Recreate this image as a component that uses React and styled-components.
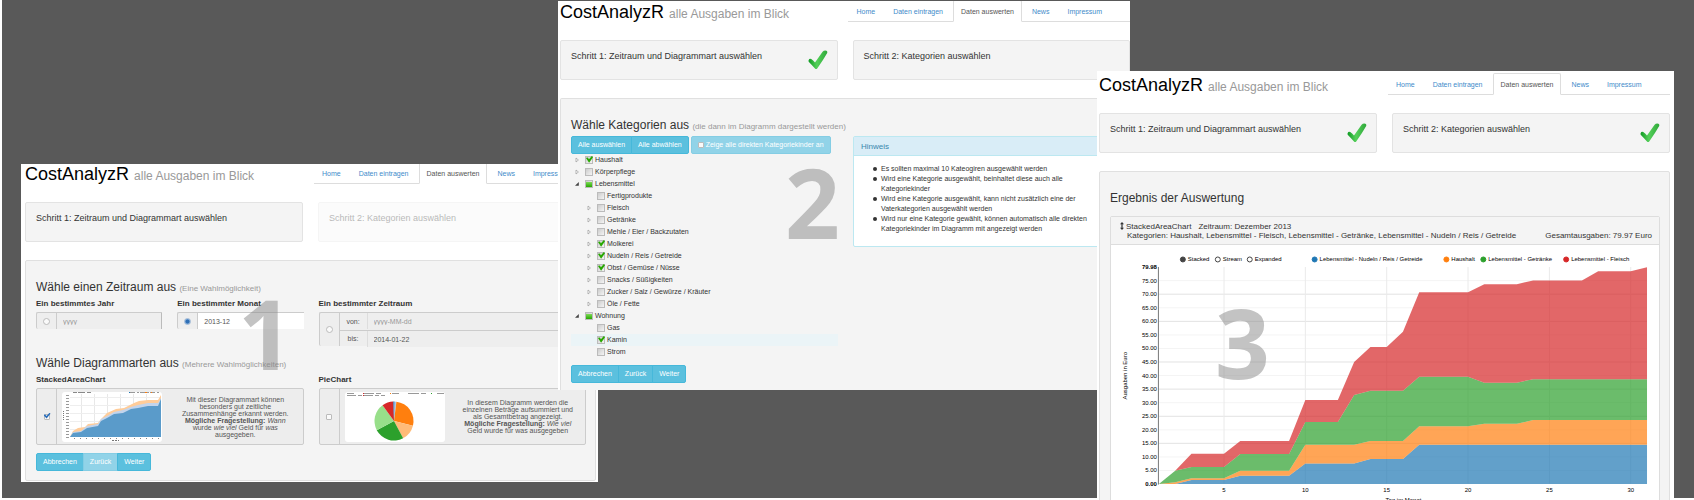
import React from "react";
import styled, { createGlobalStyle, css } from "styled-components";

const GlobalStyle = createGlobalStyle`
  *, *::before, *::after { box-sizing: border-box; }
  body {
    margin: 0;
    background: #fff;
    color: #333;
    font: 7px/10px "Liberation Sans", Arial, sans-serif;
  }
  button, input { font: inherit; margin: 0; }
  h1, h2, h3, p, ul { margin: 0; padding: 0; font-weight: 400; }
`;

/* ---------- desktop and windows ---------- */

const Page = styled.main`
  height: 100vh;
  overflow: hidden;
  padding: 0 0 2px 2px;
`;

const Desktop = styled.div`
  height: 100%;
  background: #595959;
  display: grid;
  grid-template-columns:
    minmax(0, 19fr) minmax(0, 537fr) minmax(0, 40fr) minmax(0, 499fr)
    minmax(0, 33fr) minmax(0, 544fr) minmax(0, 20fr);
  align-items: start;
`;

const Window = styled.section`
  position: relative;
  grid-row: 1;
  grid-column: ${(p) => p.$columns};
  margin-top: ${(p) => p.$top}px;
  padding: ${(p) => p.$padding};
  background: #fff;
  overflow: hidden;
`;

const BigNumber = styled.div`
  position: absolute;
  left: ${(p) => p.$left}px;
  top: ${(p) => p.$top}px;
  font: 700 96px/100px "Open Sans", "Noto Sans", sans-serif;
  color: rgba(136, 136, 136, 0.5);
  pointer-events: none;
`;

/* ---------- header ---------- */

const Header = styled.header`
  display: grid;
  grid-template-columns: minmax(0, 289fr) minmax(0, 282fr);
  height: 20px;
  margin-bottom: 18px;
`;

const Brand = styled.h1`
  font-size: 18px;
  line-height: 20px;
  color: #000;
  white-space: nowrap;
`;

const Tagline = styled.small`
  font-size: 12px;
  line-height: 1;
  color: #999;
`;

const Tabs = styled.nav`
  display: flex;
  gap: 2px;
  height: 22px;
  margin-top: -2px;
  border-bottom: 1px solid #ddd;
`;

const Tab = styled.a`
  height: 22px;
  padding: 0 7px;
  border: 1px solid transparent;
  border-radius: 2px 2px 0 0;
  line-height: 21px;
  color: #428bca;
  text-decoration: none;
  white-space: nowrap;
  ${(p) =>
    p.$active &&
    css`
      color: #555;
      background: #fff;
      border-color: #ddd #ddd #fff;
    `}
`;

/* ---------- steps ---------- */

const Columns = styled.div`
  display: grid;
  grid-template-columns: minmax(0, 1fr) minmax(0, 1fr);
  gap: 15px;
`;

const Steps = styled(Columns)`
  margin-bottom: 18px;
`;

const StepCard = styled.div`
  display: flex;
  justify-content: space-between;
  height: 40px;
  padding: 9px 9px 9px 10px;
  border: 1px solid #e3e3e3;
  border-radius: 2px;
  background: #f4f4f4;
  opacity: ${(p) => (p.$disabled ? 0.35 : 1)};
`;

const StepTitle = styled.h2`
  font-size: 9px;
  line-height: 12px;
`;

const Panel = styled.div`
  padding: 19px 9px ${(p) => (p.$open ? 7 : 9)}px 10px;
  border: 1px solid #e0e0e0;
  border-bottom-width: ${(p) => (p.$open ? 0 : 1)}px;
  border-radius: ${(p) => (p.$open ? "2px 2px 0 0" : "2px")};
  background: #f4f4f4;
`;

const Heading = styled.h2`
  margin: ${(p) => (p.$spaced ? 10 : 0)}px 0 4px;
  font-size: 12px;
  line-height: 14px;
  white-space: nowrap;
`;

const Hint = styled.small`
  font-size: 8px;
  line-height: 1;
  color: #999;
`;

/* ---------- form controls ---------- */

const FieldLabel = styled.label`
  display: block;
  margin-bottom: 3px;
  font-size: 8px;
  line-height: 11px;
  font-weight: 700;
`;

const Periods = styled(Columns)`
  min-height: 48px;
`;

const InputGroup = styled.div`
  display: flex;
  border: 1px solid #ccc;
  border-width: 1px 0 0 1px;
  border-radius: 2px 0 0 2px;
  height: ${(p) => (p.$tall ? 34 : 17)}px;
  background: #eee;
`;

const Addon = styled.span`
  display: flex;
  flex: 0 0 ${(p) => (p.$wide ? 27 : 19)}px;
  align-items: center;
  justify-content: center;
  color: #555;
`;

const TextInput = styled.input`
  flex: 1;
  min-width: 0;
  width: 100%;
  height: 16px;
  padding: 0 6px;
  border: 0;
  border-left: 1px solid #ccc;
  border-right: ${(p) => (p.$cut ? "0" : "1px solid #bbb")};
  border-radius: 0;
  background: ${(p) => (p.disabled ? "#eee" : "#fff")};
  color: #555;
  &::placeholder { color: #999; opacity: 1; }
`;

const RangeRows = styled.div`
  flex: 1;
  border-left: 1px solid #ccc;
`;

const RangeRow = styled.div`
  display: flex;
  height: 17px;
  & + & { border-top: 1px solid #ccc; }
  input { border-left-color: #ddd; }
`;

const Radio = styled.input.attrs({ type: "radio" })`
  appearance: none;
  width: 7px;
  height: 7px;
  border: 1px solid #bbb;
  border-radius: 50%;
  background: #fafafa;
  &:checked {
    border-color: #9db7d5;
    background: radial-gradient(circle, #2f6fb5 40%, #8db8e4 80%);
  }
`;

const Check = styled.input.attrs({ type: "checkbox" })`
  appearance: none;
  flex: none;
  width: 6px;
  height: 6px;
  border: 1px solid #bbb;
  border-radius: 1px;
  background: #fafafa;
  &:checked::before {
    content: "";
    display: block;
    width: 7px;
    height: 6px;
    margin: -2px 0 0 -1px;
    background: #2a6ebb;
    clip-path: polygon(0 45%, 22% 30%, 42% 58%, 86% 4%, 100% 20%, 44% 100%);
  }
`;

const ChartOption = styled.div`
  display: flex;
  height: 57px;
  margin-bottom: 8px;
  border: 1px solid #ccc;
  border-radius: 2px;
  background: #ededed;
`;

const OptionBody = styled.div`
  flex: 1;
  display: flex;
  align-items: center;
  gap: 14px;
  padding: 0 8px 0 5px;
  border-left: 1px solid #ccc;
`;

const Thumb = styled.svg`
  flex: none;
  width: 100px;
  height: 50px;
  border-radius: 3px;
  background: #fff;
`;

const OptionText = styled.p`
  flex: 1;
  line-height: 7px;
  text-align: center;
  color: #555;
`;

const ButtonGroup = styled.div`
  display: flex;
`;

const Button = styled.button`
  height: 18px;
  padding: 0 6px;
  border: 1px solid #46b8da;
  background: #5bc0de;
  color: #fff;
  line-height: 16px;
  white-space: nowrap;
  & + & { margin-left: -1px; }
  &:first-child { border-radius: 2px 0 0 2px; }
  &:last-child { border-radius: 0 2px 2px 0; }
  &:disabled {
    background: #91d3e8;
    border-color: #84cde4;
  }
`;

const ToggleButton = styled.label`
  display: flex;
  align-items: center;
  gap: 2px;
  height: 18px;
  padding: 0 6px;
  border: 1px solid #84cde4;
  border-radius: 2px;
  background: #91d3e8;
  color: #fff;
  white-space: nowrap;
`;

/* ---------- category tree ---------- */

const Toolbar = styled.div`
  display: flex;
  gap: 2px;
`;

const Tree = styled.ul`
  margin-bottom: 7px;
  list-style: none;
`;

const TreeRow = styled.li`
  display: flex;
  align-items: center;
  height: 12px;
  padding-left: ${(p) => 4 + p.$level * 12}px;
  background: ${(p) => (p.$active ? "#ebf4f7" : "transparent")};
`;

const TreeCheck = styled.input.attrs({ type: "checkbox" })`
  appearance: none;
  flex: none;
  width: 8px;
  height: 8px;
  margin: 0 2px 0 6px;
  border: 1px solid #bbb;
  background: linear-gradient(135deg, #ccc, #f4f4f4);
  &:checked::before,
  &:indeterminate::before {
    content: "";
    display: block;
    width: 7px;
    height: 7px;
    margin: -1px 0 0 0;
    background: #27a800;
    clip-path: polygon(0 30%, 25% 22%, 42% 45%, 84% 0, 100% 18%, 44% 96%);
  }
  &:indeterminate::before {
    width: 6px;
    height: 5px;
    margin: 1px 0 0 0;
    clip-path: none;
    background: linear-gradient(#7ed957, #27a800);
  }
`;

const Arrow = styled.svg`
  width: 4px;
  height: 6px;
  flex: none;
`;

const NoteBox = styled.aside`
  align-self: start;
  margin-top: 18px;
  border: 1px solid #bce8f1;
  border-radius: 2px;
  background: #fff;
`;

const NoteTitle = styled.h3`
  height: 19px;
  padding: 0 7px;
  border-bottom: 1px solid #bce8f1;
  background: #d9edf7;
  font-size: 8px;
  line-height: 19px;
  color: #3a87ad;
`;

const NoteList = styled.ul`
  padding: 8px 7px 12px 27px;
  list-style: none;
`;

const NoteItem = styled.li`
  position: relative;
  &::before {
    content: "";
    position: absolute;
    left: -8px;
    top: 3px;
    width: 4px;
    height: 4px;
    border-radius: 50%;
    background: #333;
  }
`;

/* ---------- result ---------- */

const ResultCard = styled.article`
  margin-top: 11px;
  border: 1px solid #ddd;
  border-radius: 2px;
  background: #fff;
`;

const ResultHeader = styled.header`
  display: flex;
  align-items: flex-end;
  justify-content: space-between;
  padding: 5px 7px 4px 9px;
  border-bottom: 1px solid #ddd;
  background: #f4f4f4;
  font-size: 8px;
  line-height: 9px;
`;

const ResultLine = styled.div`
  display: flex;
  gap: 7px;
  padding-left: ${(p) => (p.$indent ? 7 : 0)}px;
  white-space: nowrap;
`;

const ChartName = styled.span`
  display: flex;
  gap: 2px;
`;

const Chart = styled.svg`
  display: block;
  width: 100%;
  font: 6px "Liberation Sans", Arial, sans-serif;
`;

/* ---------- data ---------- */

const TABS = ["Home", "Daten eintragen", "Daten auswerten", "News", "Impressum"];

const TREE = [
  ["Haushalt", 0, "closed", "on"],
  ["Körperpflege", 0, "closed", ""],
  ["Lebensmittel", 0, "open", "part"],
  ["Fertigprodukte", 1, "", ""],
  ["Fleisch", 1, "closed", ""],
  ["Getränke", 1, "closed", ""],
  ["Mehle / Eier / Backzutaten", 1, "closed", ""],
  ["Molkerei", 1, "closed", "on"],
  ["Nudeln / Reis / Getreide", 1, "closed", "on"],
  ["Obst / Gemüse / Nüsse", 1, "closed", "on"],
  ["Snacks / Süßigkeiten", 1, "closed", ""],
  ["Zucker / Salz / Gewürze / Kräuter", 1, "closed", ""],
  ["Öle / Fette", 1, "closed", ""],
  ["Wohnung", 0, "open", "part"],
  ["Gas", 1, "", ""],
  ["Kamin", 1, "", "on"],
  ["Strom", 1, "", ""],
];

const NOTES = [
  "Es sollten maximal 10 Kateogiren ausgewählt werden",
  "Wird eine Kategorie ausgewählt, beinhaltet diese auch alle Kategoriekinder",
  "Wird eine Kategorie ausgewählt, kann nicht zusätzlich eine der Vaterkategorien ausgewählt werden",
  "Wird nur eine Kategorie gewählt, können automatisch alle direkten Kategoriekinder im Diagramm mit angezeigt werden",
];

/* Upper edge of each stacked layer as [day, euro] pairs. */
const BASE = [[1, 0], [31, 0]];
const BLUE = [[1, 0], [2, 0], [3, 1.5], [5, 1.5], [6, 3], [9, 3], [10, 7.6], [13, 7.6], [14, 9.2], [16, 9.2], [17, 14.5], [31, 14.5]];
const ORANGE = [[1, 0], [2, 0.7], [3, 2.1], [5, 2.1], [6, 4.9], [9, 4.9], [10, 14.5], [13, 14.5], [14, 15.9], [16, 15.9], [17, 21.3], [20, 21.3], [21, 22.2], [23, 22.2], [24, 23.6], [31, 23.6]];
const GREEN = [[1, 0], [2, 4.9], [3, 6.3], [5, 6.3], [6, 11.1], [9, 11.1], [10, 22.9], [12, 22.9], [13, 32.8], [14, 34.4], [16, 34.4], [17, 39.6], [20, 39.6], [21, 37.4], [23, 37.4], [24, 38.7], [31, 38.7]];
const RED = [[1, 0], [2, 4.9], [3, 11.2], [5, 11.2], [6, 15.9], [9, 15.9], [10, 31], [12, 31], [13, 45], [14, 50.5], [15, 50.5], [16, 56.2], [17, 70.7], [20, 70.7], [21, 73.7], [23, 73.7], [24, 75.1], [27, 75.1], [28, 78.5], [30, 78.5], [31, 79.9]];

const LAYERS = [
  [BASE, BLUE, "#1f77b4"],
  [BLUE, ORANGE, "#ff7f0e"],
  [ORANGE, GREEN, "#2ca02c"],
  [GREEN, RED, "#d62728"],
];

const LEGEND = [
  [72, "Stacked", "#444", "#444"],
  [107, "Stream", "#fff", "#444"],
  [139, "Expanded", "#fff", "#444"],
  [204, "Lebensmittel - Nudeln / Reis / Getreide", "#1f77b4", "#1f77b4"],
  [336, "Haushalt", "#ff7f0e", "#ff7f0e"],
  [373, "Lebensmittel - Getränke", "#2ca02c", "#2ca02c"],
  [456, "Lebensmittel - Fleisch", "#d62728", "#d62728"],
];

const STRONG = [15, 25, 35, 45, 60, 70];

const sx = (day) => 48 + (day - 1) * 16.3;
const sy = (euro) => 239.5 - euro * 2.717;
const area = ([low, high]) =>
  [...high, ...[...low].reverse()].map(([d, v]) => `${sx(d).toFixed(1)},${sy(v).toFixed(1)}`).join(" ");

/* ---------- parts ---------- */

function AppHeader() {
  return (
    <Header>
      <Brand>
        CostAnalyzR <Tagline>alle Ausgaben im Blick</Tagline>
      </Brand>
      <Tabs>
        {TABS.map((t) => (
          <Tab key={t} href="#" $active={t === "Daten auswerten"}>{t}</Tab>
        ))}
      </Tabs>
    </Header>
  );
}

function DoneMark({ id }) {
  return (
    <svg width="20" height="20" viewBox="0 0 20 20" aria-hidden="true">
      <defs>
        <linearGradient id={id} x1="0" y1="0" x2="1" y2="0">
          <stop offset="0" stopColor="#0f9a22" />
          <stop offset="0.45" stopColor="#55d05a" />
          <stop offset="1" stopColor="#2fa83a" />
        </linearGradient>
      </defs>
      <path
        d="M0.6 10.2 Q1.4 8.2 3.2 9 Q5.2 10.4 7 12.6 Q10.6 7.4 14.6 1.8 Q15.6 0.6 17.4 0.6 Q19.8 0.8 19.2 3 Q15 10.4 9.4 18.2 Q8.2 19.8 7 18.4 Q3.6 14.8 0.9 12 Q0.3 11.2 0.6 10.2Z"
        fill={`url(#${id})`}
      />
    </svg>
  );
}

function StepBar({ done, id, disabledSecond }) {
  return (
    <Steps>
      <StepCard>
        <StepTitle>Schritt 1: Zeitraum und Diagrammart auswählen</StepTitle>
        {done > 0 && <DoneMark id={`${id}a`} />}
      </StepCard>
      <StepCard $disabled={disabledSecond}>
        <StepTitle>Schritt 2: Kategorien auswählen</StepTitle>
        {done > 1 && <DoneMark id={`${id}b`} />}
      </StepCard>
    </Steps>
  );
}

function WizardButtons({ backDisabled }) {
  return (
    <ButtonGroup>
      <Button type="button">Abbrechen</Button>
      <Button type="button" disabled={backDisabled}>Zurück</Button>
      <Button type="button">Weiter</Button>
    </ButtonGroup>
  );
}

function AreaThumb() {
  const blue = "8,45 11,41 19,40 25,36 36,34 39,29 45,26 52,22 61,21 69,17 76,16 86,14 96,14 99,7";
  const pale = "8,45 11,40 19,39 25,34 36,32 39,27 45,24 52,20 61,18 69,15 76,13 86,11 96,11 99,6";
  const peach = "8,45 11,39 16,36 23,35 26,32 36,31 39,27 45,21 54,17 62,16 72,11 77,9 86,8 96,8 99,3";
  return (
    <Thumb viewBox="0 0 100 50" aria-hidden="true">
      {[19, 32, 45, 58, 71, 84].map((x) => (
        <path key={x} d={`M${x}.5 2V45`} stroke="#e8e8e8" />
      ))}
      {[5, 13, 21, 29, 37].map((y) => (
        <path key={y} d={`M8 ${y}.5H99`} stroke="#eee" />
      ))}
      <path d="M11 .5H30" stroke="#888" strokeDasharray="4 1 7 2" />
      <path d="M68 .5H98" stroke="#999" strokeDasharray="5 2 2 1" />
      <path d="M67 .5h1" stroke="#1f77b4" />
      <path d="M83 .5h2M89 .5h1" stroke="#ff7f0e" />
      <polygon points={`${peach} 99,45`} fill="#ffcc99" />
      <polygon points={`${pale} 99,45`} fill="#c2d4ec" />
      <polygon points={`${blue} 99,45`} fill="#5a9bca" />
      <path d="M5.5 3V46" stroke="#999" strokeWidth="3" strokeDasharray="1 2" />
      <path d="M1.5 19V29" stroke="#777" strokeDasharray="1 1" />
      <path d="M12 46.5H98" stroke="#888" strokeDasharray="1 5" />
      <path d="M50 48.5H57" stroke="#777" strokeDasharray="2 1" />
    </Thumb>
  );
}

const SLICES = [
  [0, 7, "#aec7e8"],
  [7, 104, "#ff7f0e"],
  [104, 152, "#ffbb78"],
  [152, 242, "#2ca02c"],
  [242, 324, "#98df8a"],
  [324, 358, "#d62728"],
  [358, 361, "#1f77b4"],
];

function PieThumb() {
  const at = (deg) => {
    const a = (deg * Math.PI) / 180;
    return `${(49 + 19.5 * Math.sin(a)).toFixed(2)} ${(29 - 19.5 * Math.cos(a)).toFixed(2)}`;
  };
  return (
    <Thumb viewBox="0 0 100 50" aria-hidden="true">
      {SLICES.map(([from, to, fill]) => (
        <path key={from} d={`M49 29L${at(from)}A19.5 19.5 0 0 1 ${at(to)}Z`} fill={fill} />
      ))}
      <path d="M2 1.5H99" stroke="#999" strokeDasharray="7 9 11 2 5 11" />
      <path d="M2 3.5H40" stroke="#999" strokeDasharray="9 2 4 2" />
      <path d="M18 1.5h1M18 3.5h1" stroke="#d62728" />
      <path d="M45 1.5h1" stroke="#ff7f0e" />
      <path d="M86 1.5h1" stroke="#2ca02c" />
    </Thumb>
  );
}

function PeriodWindow() {
  return (
    <Window $columns="2 / 4" $top={164} $padding="0 2px 1px 4px">
      <AppHeader />
      <StepBar done={0} id="w1" disabledSecond />
      <Panel>
        <Heading>Wähle einen Zeitraum aus <Hint>(Eine Wahlmöglichkeit)</Hint></Heading>
        <Periods>
          <Columns>
            <div>
              <FieldLabel htmlFor="year">Ein bestimmtes Jahr</FieldLabel>
              <InputGroup>
                <Addon><Radio name="period" aria-label="Jahr" /></Addon>
                <TextInput id="year" placeholder="yyyy" disabled />
              </InputGroup>
            </div>
            <div>
              <FieldLabel htmlFor="month">Ein bestimmter Monat</FieldLabel>
              <InputGroup>
                <Addon><Radio name="period" aria-label="Monat" defaultChecked /></Addon>
                <TextInput id="month" defaultValue="2013-12" $cut />
              </InputGroup>
            </div>
          </Columns>
          <div>
            <FieldLabel htmlFor="range">Ein bestimmter Zeitraum</FieldLabel>
            <InputGroup $tall>
              <Addon><Radio name="period" id="range" /></Addon>
              <RangeRows>
                <RangeRow>
                  <Addon as="label" htmlFor="from" $wide>von:</Addon>
                  <TextInput id="from" placeholder="yyyy-MM-dd" disabled />
                </RangeRow>
                <RangeRow>
                  <Addon as="label" htmlFor="to" $wide>bis:</Addon>
                  <TextInput id="to" defaultValue="2014-01-22" disabled />
                </RangeRow>
              </RangeRows>
            </InputGroup>
          </div>
        </Periods>
        <Heading $spaced>Wähle Diagrammarten aus <Hint>(Mehrere Wahlmöglichkeiten)</Hint></Heading>
        <Columns>
          <div>
            <FieldLabel htmlFor="stacked">StackedAreaChart</FieldLabel>
            <ChartOption>
              <Addon><Check id="stacked" defaultChecked /></Addon>
              <OptionBody>
                <AreaThumb />
                <OptionText>
                  Mit dieser Diagrammart können besonders gut zeitliche Zusammenhänge erkannt werden.{" "}
                  <b>Mögliche Fragestellung:</b> <i>Wann</i> wurde <i>wie viel</i> Geld für <i>was</i> ausgegeben.
                </OptionText>
              </OptionBody>
            </ChartOption>
          </div>
          <div>
            <FieldLabel htmlFor="pie">PieChart</FieldLabel>
            <ChartOption>
              <Addon><Check id="pie" /></Addon>
              <OptionBody>
                <PieThumb />
                <OptionText>
                  In diesem Diagramm werden die einzelnen Beträge aufsummiert und als Gesamtbetrag angezeigt.{" "}
                  <b>Mögliche Fragestellung:</b> <i>Wie viel</i> Geld wurde für was ausgegeben
                </OptionText>
              </OptionBody>
            </ChartOption>
          </div>
        </Columns>
        <WizardButtons backDisabled />
      </Panel>
      <BigNumber $left={217} $top={119}>1</BigNumber>
    </Window>
  );
}

function TreeArrow({ state }) {
  return (
    <Arrow viewBox="0 0 4 6" aria-hidden="true">
      {state === "closed" && <path d="M1 1L3.4 3L1 5Z" fill="#fff" stroke="#999" strokeWidth="0.7" />}
      {state === "open" && <path d="M3.8 1V4.8H0Z" fill="#444" />}
    </Arrow>
  );
}

function CategoryWindow() {
  return (
    <Window $columns="3 / 6" $top={1} $padding="1px 0 0 2px">
      <AppHeader />
      <StepBar done={1} id="w2" />
      <Panel $open>
        <Columns>
          <div>
            <Heading>Wähle Kategorien aus <Hint>(die dann im Diagramm dargestellt werden)</Hint></Heading>
            <Toolbar>
              <ButtonGroup>
                <Button type="button">Alle auswählen</Button>
                <Button type="button">Alle abwählen</Button>
              </ButtonGroup>
              <ToggleButton><Check />Zeige alle direkten Kategoriekinder an</ToggleButton>
            </Toolbar>
            <Tree>
              {TREE.map(([name, level, arrow, state]) => (
                <TreeRow key={name} $level={level} $active={name === "Kamin"}>
                  <TreeArrow state={arrow} />
                  <TreeCheck
                    id={`cat-${name}`}
                    defaultChecked={state === "on"}
                    ref={(el) => { if (el) el.indeterminate = state === "part"; }}
                  />
                  <label htmlFor={`cat-${name}`}>{name}</label>
                </TreeRow>
              ))}
            </Tree>
            <WizardButtons />
          </div>
          <NoteBox>
            <NoteTitle>Hinweis</NoteTitle>
            <NoteList>
              {NOTES.map((n) => <NoteItem key={n}>{n}</NoteItem>)}
            </NoteList>
          </NoteBox>
        </Columns>
      </Panel>
      <BigNumber $left={227} $top={151}>2</BigNumber>
    </Window>
  );
}

function StackedChart() {
  const ticks = Array.from({ length: 16 }, (_, i) => i * 5);
  return (
    <Chart viewBox="0 0 549 270" role="img" aria-label="StackedAreaChart">
      {ticks.slice(1).map((v) => (
        <path key={v} d={`M48 ${sy(v).toFixed(1)}H${sx(31)}`} stroke={STRONG.includes(v) ? "#e2e2e2" : "#f4f4f4"} />
      ))}
      {[5, 10, 15, 20, 25, 30].map((d) => (
        <path key={d} d={`M${sx(d).toFixed(1)} 22V239`} stroke="#eaeaea" />
      ))}
      {LAYERS.map(([low, high, fill]) => (
        <polygon key={fill} points={area([low, high])} fill={fill} fillOpacity="0.7" />
      ))}
      <path d="M47.5 22V240" stroke="#777" />
      {ticks.map((v) => (
        <text key={v} x="46" y={sy(v) + 2} textAnchor="end" fontWeight={v === 0 ? 700 : 400} fill="#000">
          {v.toFixed(2)}
        </text>
      ))}
      <text x="46" y={sy(79.98) + 2} textAnchor="end" fontWeight="700" fill="#000">79.98</text>
      {[5, 10, 15, 20, 25, 30].map((d) => (
        <text key={d} x={sx(d)} y="247.5" textAnchor="middle" fill="#000">{d}</text>
      ))}
      <text x="293" y="257" textAnchor="middle" fill="#000">Tag im Monat</text>
      <text transform="translate(16 131) rotate(-90)" textAnchor="middle" fill="#000">Ausgaben in Euro</text>
      {LEGEND.map(([x, label, fill, stroke]) => (
        <g key={label}>
          <circle cx={x} cy="14.5" r="2.5" fill={fill} stroke={stroke} />
          <text x={x + 5} y="16.5" fill="#000">{label}</text>
        </g>
      ))}
    </Chart>
  );
}

function ResultWindow() {
  return (
    <Window $columns="5 / 7" $top={71} $padding="4px 4px 0 2px">
      <AppHeader />
      <StepBar done={2} id="w3" />
      <Panel>
        <Heading>Ergebnis der Auswertung</Heading>
        <ResultCard>
          <ResultHeader>
            <div>
              <ResultLine>
                <ChartName>
                  <svg width="4" height="8" viewBox="0 0 4 8" aria-hidden="true">
                    <path d="M2 0L4 2.2H2.6V5.8H4L2 8L0 5.8H1.4V2.2H0Z" fill="#333" />
                  </svg>
                  StackedAreaChart
                </ChartName>
                <span>Zeitraum: Dezember 2013</span>
              </ResultLine>
              <ResultLine $indent>
                Kategorien: Haushalt, Lebensmittel - Fleisch, Lebensmittel - Getränke, Lebensmittel - Nudeln / Reis / Getreide
              </ResultLine>
            </div>
            <span>Gesamtausgaben: 79.97 Euro</span>
          </ResultHeader>
          <StackedChart />
        </ResultCard>
      </Panel>
      <BigNumber $left={118} $top={221}>3</BigNumber>
    </Window>
  );
}

export default function App() {
  return (
    <Page>
      <GlobalStyle />
      <Desktop>
        <PeriodWindow />
        <CategoryWindow />
        <ResultWindow />
      </Desktop>
    </Page>
  );
}
